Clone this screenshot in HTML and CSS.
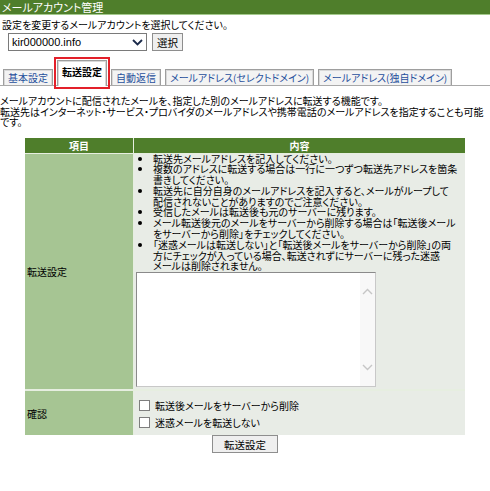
FILE: index.html
```html
<!DOCTYPE html>
<html lang="ja">
<head>
<meta charset="utf-8">
<title>メールアカウント管理</title>
<link rel="stylesheet" href="styles.css">
</head>
<body>
<div class="titlebar">メールアカウント管理</div>
<p class="lead">設定を変更するメールアカウントを選択してください。</p>
<form class="account-form">
  <span class="select-wrap">
    <select class="account-select"><option>kir000000.info</option></select>
    <svg class="select-arrow" width="11" height="7" viewBox="0 0 11 7"><path d="M1 1 L5.5 5.5 L10 1" fill="none" stroke="#1b2a4a" stroke-width="1.8"/></svg>
  </span>
  <button type="button" class="btn">選択</button>
</form>
<div class="tabs">
  <a class="tab">基本設定</a>
  <a class="tab active">転送設定</a>
  <a class="tab">自動返信</a>
  <a class="tab">メールアドレス(セレクトドメイン)</a>
  <a class="tab">メールアドレス(独自ドメイン)</a>
</div>
<p class="desc">メールアカウントに配信されたメールを、指定した別のメールアドレスに転送する機能です。<br>転送先はインターネット・サービス・プロバイダのメールアドレスや携帯電話のメールアドレスを指定することも可能<br>です。</p>
<table class="settings">
  <tr>
    <th class="col-item">項目</th>
    <th class="col-body">内容</th>
  </tr>
  <tr>
    <td class="label">転送設定</td>
    <td class="content">
      <ul class="notes">
        <li>転送先メールアドレスを記入してください。</li>
        <li>複数のアドレスに転送する場合は一行に一つずつ転送先アドレスを箇条<br>書きしてください。</li>
        <li>転送先に自分自身のメールアドレスを記入すると、メールがループして<br>配信されないことがありますのでご注意ください。</li>
        <li>受信したメールは転送後も元のサーバーに残ります。</li>
        <li>メール転送後元のメールをサーバーから削除する場合は「転送後メール<br>をサーバーから削除」をチェックしてください。</li>
        <li>「迷惑メールは転送しない」と「転送後メールをサーバーから削除」の両<br>方にチェックが入っている場合、転送されずにサーバーに残った迷惑<br>メールは削除されません。</li>
      </ul>
      <div class="textbox">
        <textarea class="addresses"></textarea>
        <div class="scrollbar">
          <svg width="11" height="7" viewBox="0 0 11 7"><path d="M1 6 L5.5 1.5 L10 6" fill="none" stroke="#c6c6c6" stroke-width="1.4"/></svg>
          <svg width="11" height="7" viewBox="0 0 11 7"><path d="M1 1 L5.5 5.5 L10 1" fill="none" stroke="#c6c6c6" stroke-width="1.4"/></svg>
        </div>
      </div>
    </td>
  </tr>
  <tr>
    <td class="label">確認</td>
    <td class="content checks">
      <label class="check"><input type="checkbox"><span>転送後メールをサーバーから削除</span></label>
      <label class="check"><input type="checkbox"><span>迷惑メールを転送しない</span></label>
    </td>
  </tr>
</table>
<div class="submit-row"><button type="button" class="btn submit">転送設定</button></div>
</body>
</html>
```
FILE: styles.css
```css
html, body {
  margin: 0;
  padding: 0;
  background: #fff;
}
body {
  font-family: "Noto Sans CJK JP", "Noto Sans", sans-serif;
  font-size: 10px;
  font-feature-settings: "palt";
  color: #000;
  line-height: 11px;
}
.titlebar {
  background: #4f7e2b;
  color: #fff;
  font-size: 11px;
  height: 14px;
  line-height: 14px;
  padding-left: 2px;
  border-bottom: 1px solid #a4c98c;
}
.lead {
  margin: 4px 0 0 2px;
  line-height: 12px;
}
.account-form {
  display: flex;
  align-items: center;
  gap: 5px;
  margin: 2px 0 0 8px;
}
.select-wrap {
  position: relative;
  display: inline-flex;
}
.account-select {
  appearance: none;
  -webkit-appearance: none;
  width: 139px;
  height: 18px;
  border: 1px solid #7a7a7a;
  background: #fff;
  font-family: "Liberation Sans", sans-serif;
  font-size: 11px;
  padding: 0 0 0 3px;
  margin: 0;
  border-radius: 0;
  color: #000;
}
.select-arrow {
  position: absolute;
  right: 4px;
  top: 6px;
}
.btn {
  font-family: inherit;
  font-size: 10.5px;
  font-feature-settings: "palt";
  background: #efefef;
  border: 1px solid #8e8e8e;
  border-radius: 0;
  height: 18px;
  padding: 0 4px;
  margin: 0;
  color: #000;
}
.tabs {
  display: flex;
  align-items: flex-end;
  gap: 4px;
  margin-top: 8px;
  padding-left: 3px;
  border-bottom: 1px solid #a9a9a9;
  height: 26px;
}
.tab {
  display: block;
  height: 15px;
  line-height: 15px;
  padding: 0 4px;
  border: 1px solid #9e9e9e;
  border-bottom: none;
  box-shadow: inset 1px 1px 0 #d8d8d8, inset -1px 0 0 #d8d8d8;
  background: #f3f3f3;
  color: #1f4f9c;
  white-space: nowrap;
}
.tab.active {
  height: 25px;
  line-height: 22px;
  background: #fff;
  color: #000;
  font-weight: bold;
  margin-bottom: -1px;
  outline: 2px solid #e3202a;
  outline-offset: 1px;
}
.desc {
  margin: 10px 0 0 0;
  line-height: 10.5px;
  white-space: nowrap;
}
.settings {
  margin: 10px 0 0 25px;
  width: 440px;
  table-layout: fixed;
  border-collapse: collapse;
  border-spacing: 0;
}
.settings th {
  background: #4f7e2b;
  color: #fff;
  font-weight: bold;
  height: 15px;
  padding: 0;
  line-height: 15px;
}
.col-item { width: 108px; }
.settings th + th,
.settings td + td {
  border-left: 1px solid #e6eee0;
}
.settings tr + tr td {
  border-top: 1px solid #e6eee0;
}
.settings tr + tr + tr td {
  border-top: 2px solid #e6eee0;
}
.label {
  background: #a6c593;
  padding: 0 2px;
  vertical-align: middle;
}
.content {
  background: #e8ece6;
  padding: 0 2px 2px 2px;
  vertical-align: top;
}
.notes {
  margin: 0;
  padding: 0 0 0 17px;
  line-height: 10.8px;
  white-space: nowrap;
}
.notes li {
  list-style: disc;
}
.textbox {
  display: flex;
  width: 238px;
  height: 113px;
  border: 1px solid #8a8a8a;
  border-right-color: #c8c8c8;
  border-bottom-color: #c8c8c8;
  background: #fff;
}
.addresses {
  flex: 1;
  border: none;
  outline: none;
  resize: none;
  margin: 0;
  padding: 0;
}
.scrollbar {
  width: 15px;
  background: #f8f8f8;
  display: flex;
  flex-direction: column;
  justify-content: space-between;
  align-items: center;
  padding: 15px 0 15px;
}
.checks {
  padding: 6px 4px 4px 5px;
  vertical-align: top;
}
.check {
  display: flex;
  align-items: center;
  height: 17px;
}
.check input {
  appearance: none;
  -webkit-appearance: none;
  width: 11px;
  height: 11px;
  border: 1px solid #7e7e7e;
  background: #fff;
  margin: 0 5px 0 0;
}
.submit-row {
  display: flex;
  justify-content: center;
}
.submit {
  width: 66px;
  height: 18px;
  padding: 0;
}
```
